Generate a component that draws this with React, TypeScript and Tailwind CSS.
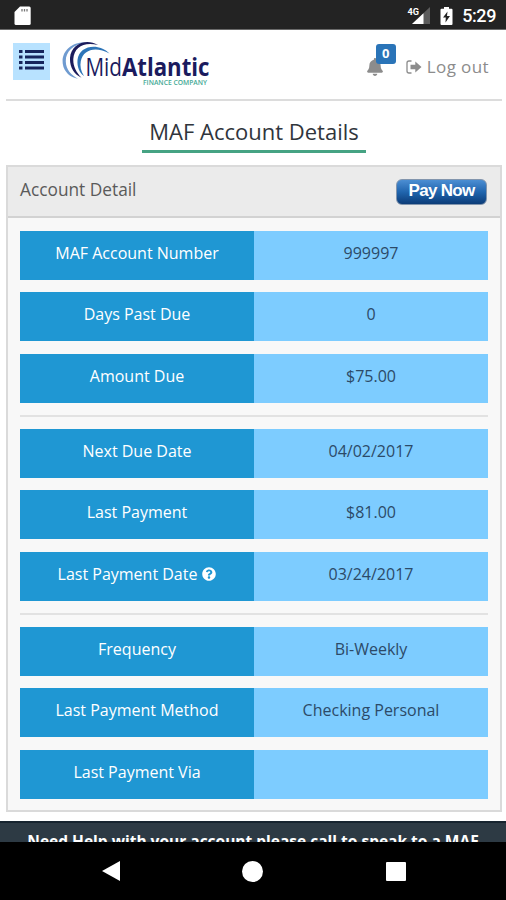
import { FaBell, FaQuestionCircle } from 'react-icons/fa'

type Row = { label: string; value: string; help?: boolean }

const groups: Row[][] = [
    [
        { label: 'MAF Account Number', value: '999997' },
        { label: 'Days Past Due', value: '0' },
        { label: 'Amount Due', value: '$75.00' },
    ],
    [
        { label: 'Next Due Date', value: '04/02/2017' },
        { label: 'Last Payment', value: '$81.00' },
        { label: 'Last Payment Date', value: '03/24/2017', help: true },
    ],
    [
        { label: 'Frequency', value: 'Bi-Weekly' },
        { label: 'Last Payment Method', value: 'Checking Personal' },
        { label: 'Last Payment Via', value: '' },
    ],
]

function StatusBar() {
    return (
        <div className="flex h-[30px] shrink-0 items-center justify-between border-b border-[#6a6a6a] bg-[#232323] pt-[2px] pr-[10px] pl-[14px]">
            <svg width="17" height="20" viewBox="0 0 17 20">
                <path d="M6 0.5h9.2a1.5 1.5 0 0 1 1.5 1.5v15.5a1.5 1.5 0 0 1-1.5 1.5H2a1.5 1.5 0 0 1-1.5-1.5V6z" fill="#fff" />
                <path d="M8 3v2.500M10.500 3v2.500M13 3v2.500" stroke="#777" strokeWidth="1.3" />
            </svg>
            <div className="flex items-center">
                <svg width="24" height="20" viewBox="0 0 24 20">
                    <path d="M23 1v17H5z" fill="#5c5c5c" />
                    <path d="M16.5 7.2V18H5z" fill="#fff" />
                    <text x="0.500" y="8.500" fontSize="9.500" fontWeight="700" fill="#fff" stroke="#232323" strokeWidth="2" paintOrder="stroke" textLength="11.5" lengthAdjust="spacingAndGlyphs" fontFamily="Roboto, sans-serif">4G</text>
                </svg>
                <svg className="ml-[9px]" width="13" height="20" viewBox="0 0 13 20">
                    <path d="M4 1h5v1.700h2.500a1 1 0 0 1 1 1V18a1 1 0 0 1-1 1h-10a1 1 0 0 1-1-1V3.700a1 1 0 0 1 1-1H4z" fill="#fff" />
                    <path d="M7.500 5.500L3 11.500h2.800L5.500 16.500l4.500-6.500H7z" fill="#232323" />
                </svg>
                <span className="ml-[9px] font-[Roboto,sans-serif] text-[18px] leading-5 font-medium tracking-[-0.4px] text-white">5:29</span>
            </div>
        </div>
    )
}

function Logo() {
    return (
        <svg className="-mt-[2px] ml-[12px]" width="160" height="48" viewBox="0 0 160 48">
            {/* Swooshes */}
            <path d="M23 1.500C10 1-1 10 .8 23c1.200 8 7.500 13.500 15.200 14.700C9 34 4 28.500 3.800 20.500 3.500 11 11 3.500 23 1.500z" fill="#6f9bd0" />
            <path d="M36 4C24-3 9 3 8 17c-.5 9 4 16.500 11.500 19.700C14 31 11 25 11.300 18 12 6 22 .5 36 4z" fill="#1c1c5c" />
            <path d="M47.500 12.500C37 1.500 17 4 15.500 19c-.6 7 2 13 6.500 16-3.200-5-4.200-10-3.200-15C21.500 8 34 5 47.500 12.500z" fill="#2e75b8" />
            <g fill="#1b1b5e" fontFamily="'Open Sans', sans-serif" fontSize="25">
                <text x="23.500" y="34.500" textLength="36.500" lengthAdjust="spacingAndGlyphs">Mid</text>
                <text x="60" y="34.500" fontWeight="700" textLength="87.500" lengthAdjust="spacingAndGlyphs">Atlantic</text>
            </g>
            <text x="81" y="44" fill="#45a995" fontFamily="'Open Sans', sans-serif" fontSize="6.500" fontWeight="600" textLength="64" lengthAdjust="spacingAndGlyphs">FINANCE COMPANY</text>
        </svg>
    )
}

function Header() {
    return (
        <header className="mr-[4px] ml-[6px] flex h-[71px] shrink-0 items-start border-b-2 border-[#dcdcdc] pt-[13px] pl-[7px]">
            <button className="flex h-[37px] w-[37px] shrink-0 items-center justify-center bg-[#b8e2ff]">
                <svg className="-mt-[4px]" width="26" height="20" viewBox="0 0 26 20" fill="#17265c">
                    <path d="M0 0h3.500v3H0zM6 0h19v3H6zM0 5.500h3.500v3H0zM6 5.500h19v3H6zM0 11h3.500v3H0zM6 11h19v3H6zM0 16.500h3.500v3H0zM6 16.500h19v3H6z" />
                </svg>
            </button>
            <Logo />
            <div className="ml-auto flex items-start pr-[13px] text-[#8c8c8c]">
                <div className="relative mt-[15px]">
                    <FaBell className="h-[18px] w-[16px]" />
                    <span className="absolute -top-[14px] left-[9px] flex h-5 w-5 items-center justify-center rounded-[3px] bg-[#2a74b8] font-['Open_Sans',sans-serif] text-[13px] font-bold text-white">0</span>
                </div>
                <a className="mt-[14px] ml-[23px] flex items-center font-['Open_Sans',sans-serif] text-[17px] leading-5 tracking-[0.4px]">
                    <svg className="mr-[5px]" width="16" height="14" viewBox="0 0 16 14">
                        <path d="M5.500 1H3a2 2 0 0 0-2 2v8a2 2 0 0 0 2 2h2.500" fill="none" stroke="currentColor" strokeWidth="1.300" />
                        <path d="M4.500 4.800h4.800V1.500L15.500 7l-6.200 5.500V9.200H4.500z" fill="currentColor" />
                    </svg>
                    Log out
                </a>
            </div>
        </header>
    )
}

function DetailRow({ label, value, help }: Row) {
    return (
        <div className="flex h-[49px] text-[16px] leading-[44px]">
            <div className="flex w-1/2 items-start justify-center bg-[#1f97d3] text-white">
                {label}
                {help && <FaQuestionCircle className="mt-[15px] ml-[5px] h-[14px] w-[14px]" />}
            </div>
            <div className="w-1/2 bg-[#7dccff] text-center text-[#2c4a68]">{value}</div>
        </div>
    )
}

function AccountPanel() {
    return (
        <section className="mt-[12px] mr-[4px] ml-[6px] h-[647px] shrink-0 border-2 border-[#dadada] bg-[#f8f8f8]">
            <div className="flex h-[51px] items-start justify-between border-b-2 border-[#d2d2d2] bg-[#ebebeb] pr-[13px] pl-[12px]">
                <h2 className="mt-[11px] text-[17.300px] leading-6 text-[#5a5a5a]">Account Detail</h2>
                <button className="mt-[12px] h-[26px] w-[91px] rounded-[6px] border border-[#8295ad] bg-linear-to-b from-[#4b8ed3] via-[#2065ae] to-[#0c3c78] pb-[2px] font-['Liberation_Sans',sans-serif] text-[17px] leading-[22px] font-bold tracking-[-0.7px] text-white">Pay Now</button>
            </div>
            <div className="px-[12px] pt-[13px]">
                {groups.map((rows, i) => (
                    <div key={i}>
                        {i > 0 && <hr className="mt-[12px] mb-[12.200px] h-[2px] border-0 bg-[#e2e2e2]" />}
                        <div className="flex flex-col gap-[12.400px]">
                            {rows.map((row) => (
                                <DetailRow key={row.label} {...row} />
                            ))}
                        </div>
                    </div>
                ))}
            </div>
        </section>
    )
}

function NavBar() {
    return (
        <nav className="flex h-[58px] shrink-0 items-center justify-between bg-black pr-[100px] pl-[101px]">
            <svg width="20" height="22" viewBox="0 0 20 22" fill="#fff">
                <path d="M19 1v20L1 11z" />
            </svg>
            <span className="mr-[2px] h-[21px] w-[21px] rounded-full bg-white" />
            <span className="mt-px h-[19px] w-[20px] rounded-[1px] bg-white" />
        </nav>
    )
}

export default function App() {
    return (
        <div className="flex h-[900px] w-[506px] flex-col overflow-hidden bg-white font-['Open_Sans',sans-serif]">
            <StatusBar />
            <Header />
            <h1 className="mt-[14px] ml-[142px] h-[38px] w-[224px] shrink-0 border-b-[3px] border-[#46a383] text-center text-[22px] leading-[33px] whitespace-nowrap text-[#30353c]">
                MAF Account Details
            </h1>
            <AccountPanel />
            <footer className="mt-[9px] h-[20px] grow overflow-hidden border-t-2 border-[#17242f] bg-[#2d3a44] pt-[6px] text-center text-[15.500px] leading-6 font-bold whitespace-nowrap text-white">
                Need Help with your account please call to speak to a MAF
            </footer>
            <NavBar />
        </div>
    )
}
